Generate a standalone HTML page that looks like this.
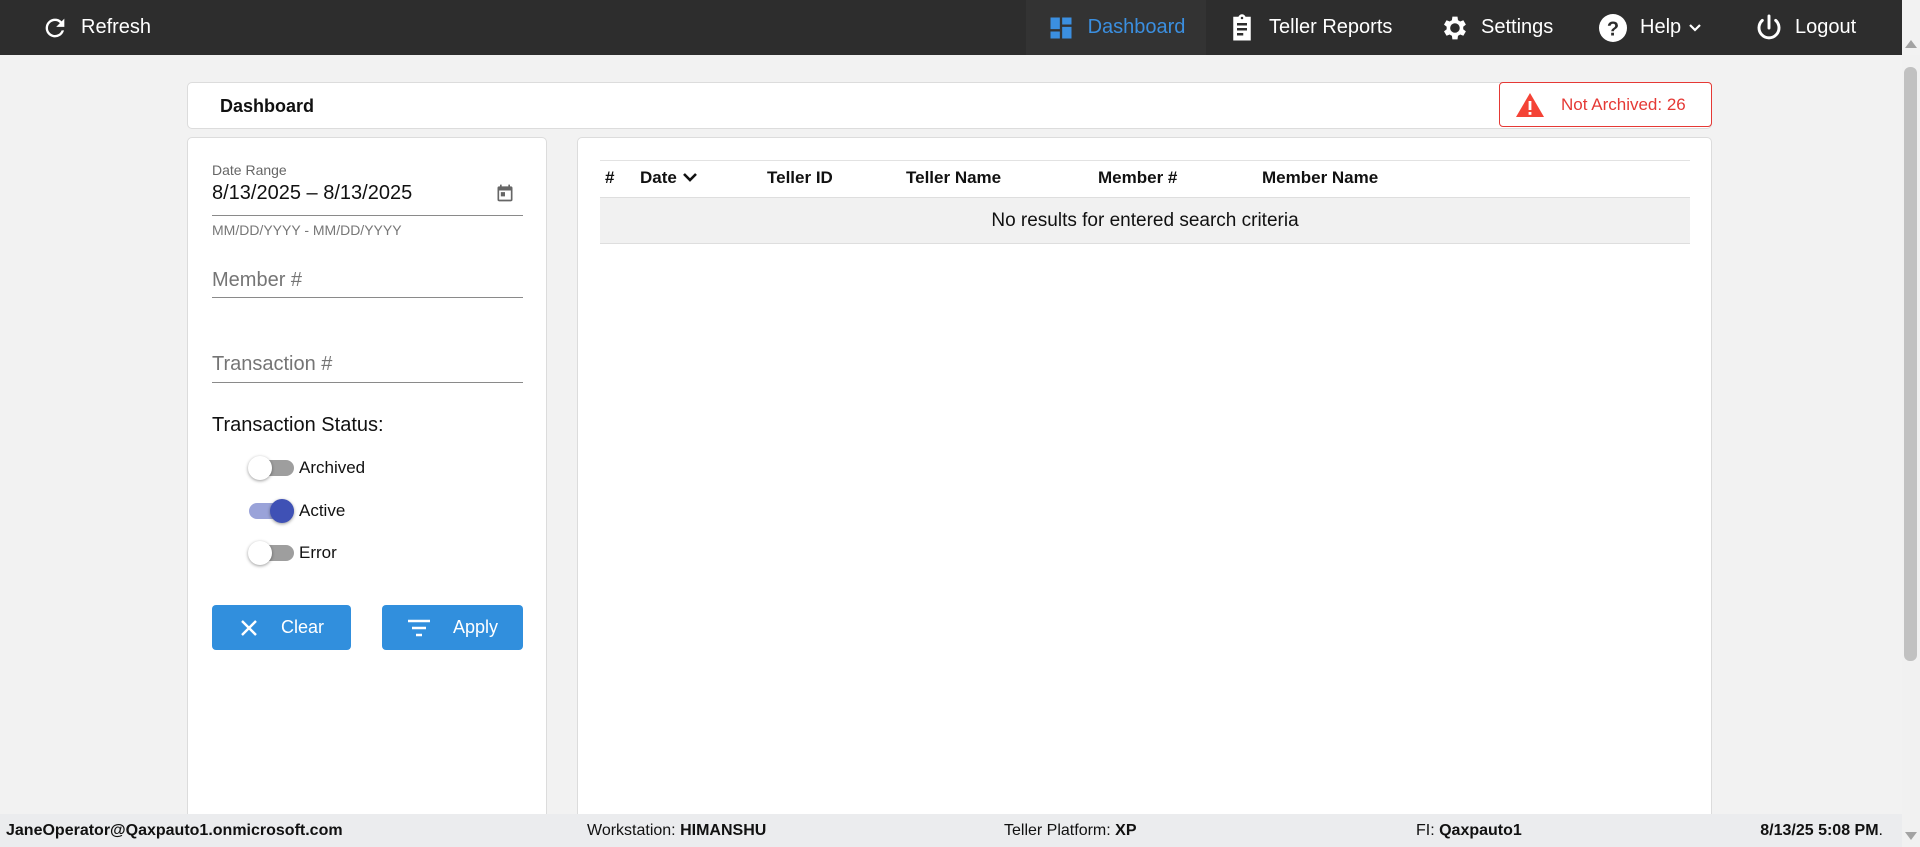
<!DOCTYPE html>
<html><head><meta charset="utf-8"><style>
*{box-sizing:border-box;margin:0;padding:0}
html,body{overflow:hidden}
body{width:1920px;height:847px;background:#f2f2f2;font-family:"Liberation Sans",Arial,sans-serif;position:relative;color:#111}
.abs{position:absolute}
.hdr{left:0;top:0;width:1902px;height:55px;background:#2d2d2d;color:#fff;font-size:20px}
.hdr .it{position:absolute;top:0;height:55px;display:flex;align-items:center}
.card{background:#fff;border:1px solid #dcdcdc;border-radius:5px}
.lab{color:#666}
.ul{height:1px;background:#8a8a8a;left:212px;width:311px}
.tg{left:249px;width:45px;height:16px;border-radius:8px;background:#9e9e9e}
.kn{width:24px;height:24px;border-radius:50%;background:#fff;top:-4px;box-shadow:0 1px 3px rgba(0,0,0,.4)}
.tl{left:299px;font-size:17px}
.btn{top:605px;height:45px;background:#318fdd;border-radius:4px;color:#fff;font-size:18px;display:flex;align-items:center;justify-content:center;gap:22px}
.th{top:168px;font-size:17px;font-weight:bold}
.ft{top:814px;left:0;width:1902px;height:33px;background:#ebecee;font-size:16px}
.ft span{position:absolute;top:8px}
</style></head><body>
<div class="abs hdr">
 <div class="it" style="left:41px"><svg width="28" height="28" viewBox="0 0 24 24"><path fill="#fff" d="M17.65 6.35A7.96 7.96 0 0 0 12 4a8 8 0 1 0 7.73 10h-2.08A6 6 0 1 1 12 6c1.66 0 3.14.69 4.22 1.78L13 11h7V4z"/></svg><span style="margin-left:12px">Refresh</span></div>
 <div class="it" style="left:1026px;width:180px;background:#333;justify-content:center"><svg width="28" height="28" viewBox="0 0 24 24"><path fill="#3b8fe0" d="M3 13h8V3H3zm0 8h8v-6H3zm10 0h8V11h-8zm0-18v6h8V3z"/></svg><span style="margin-left:13px;color:#3b8fe0">Dashboard</span></div>
 <div class="it" style="left:1227px"><svg width="30" height="30" viewBox="0 0 24 24"><path fill="#fff" d="M19 3h-4.18C14.4 1.84 13.3 1 12 1s-2.4.84-2.82 2H5v19h14zM12 3a1 1 0 1 1 0 2 1 1 0 0 1 0-2zm-4 5h8v2H8zm0 4h8v2H8zm0 4h5v2H8z"/></svg><span style="margin-left:12px">Teller Reports</span></div>
 <div class="it" style="left:1439px"><svg width="32" height="32" viewBox="0 0 24 24"><path fill="#fff" d="M19.14 12.94a7 7 0 0 0 0-1.88l2.03-1.58-1.92-3.32-2.39.96a7 7 0 0 0-1.62-.94L14.88 3.5h-3.84l-.36 2.68c-.59.24-1.13.56-1.62.94l-2.39-.96-1.92 3.32 2.03 1.58a7 7 0 0 0 0 1.88l-2.03 1.58 1.92 3.32 2.39-.96c.49.38 1.03.7 1.62.94l.36 2.68h3.84l.36-2.68c.59-.24 1.13-.56 1.62-.94l2.39.96 1.92-3.32zM12.96 15.6a3.6 3.6 0 1 1 0-7.2 3.6 3.6 0 0 1 0 7.2z" transform="translate(-1 0)"/></svg><span style="margin-left:10px">Settings</span></div>
 <div class="it" style="left:1597px"><svg width="32" height="32" viewBox="0 0 24 24"><circle cx="12" cy="12" r="10.5" fill="#fff"/><text x="12" y="17.5" text-anchor="middle" font-size="15" font-weight="bold" fill="#2d2d2d" font-family="Liberation Sans">?</text></svg><span style="margin-left:11px">Help</span><svg style="margin-left:6px" width="16" height="16" viewBox="0 0 16 16"><path d="M3 5l5 5 5-5" stroke="#fff" stroke-width="2.2" fill="none"/></svg></div>
 <div class="it" style="left:1753px"><svg width="32" height="32" viewBox="0 0 24 24"><path d="M12 3v9M7 6.3a7.5 7.5 0 1 0 10 0" stroke="#fff" stroke-width="2.2" fill="none" stroke-linecap="round"/></svg><span style="margin-left:10px">Logout</span></div>
</div>
<div class="abs" style="left:1902px;top:55px;width:18px;height:792px;background:#f1f1f1"></div>
<div class="abs" style="left:1904px;top:67px;width:13px;height:594px;background:#c1c1c1;border-radius:6px"></div>
<div class="abs" style="left:1905px;top:40px;width:0;height:0;border-left:6px solid transparent;border-right:6px solid transparent;border-bottom:8px solid #a3a3a3"></div>

<div class="abs card" style="left:187px;top:82px;width:1525px;height:47px"></div>
<div class="abs" style="left:220px;top:96px;font-size:18px;font-weight:bold">Dashboard</div>
<div class="abs" style="left:1499px;top:82px;width:213px;height:45px;border:1.5px solid #e53935;border-radius:4px;background:#fff;display:flex;align-items:center;padding-left:15px;color:#e53935;font-size:17px">
 <svg width="30" height="26" viewBox="0 0 30 26"><path d="M15 1L29 25H1z" fill="#f44336"/><rect x="13.6" y="9" width="2.8" height="9" fill="#fff"/><rect x="13.6" y="20" width="2.8" height="2.8" fill="#fff"/></svg><span style="margin-left:16px">Not Archived: 26</span></div>

<div class="abs card" style="left:187px;top:137px;width:360px;height:700px"></div>
<div class="abs card" style="left:577px;top:137px;width:1135px;height:700px"></div>

<div class="abs lab" style="left:212px;top:162px;font-size:14px">Date Range</div>
<div class="abs" style="left:212px;top:182px;font-size:20px">8/13/2025 – 8/13/2025</div>
<svg class="abs" style="left:495px;top:183px" width="20" height="20" viewBox="0 0 24 24"><path fill="#666" d="M19 4h-1V2h-2v2H8V2H6v2H5a2 2 0 0 0-2 2v14a2 2 0 0 0 2 2h14a2 2 0 0 0 2-2V6a2 2 0 0 0-2-2zm0 16H5V9h14zM7 11h5v5H7z"/></svg>
<div class="abs ul" style="top:215px"></div>
<div class="abs" style="left:212px;top:222px;font-size:14px;color:#777">MM/DD/YYYY - MM/DD/YYYY</div>
<div class="abs" style="left:212px;top:269px;font-size:20px;color:#757575">Member #</div>
<div class="abs ul" style="top:297px"></div>
<div class="abs" style="left:212px;top:353px;font-size:20px;color:#757575">Transaction #</div>
<div class="abs ul" style="top:382px"></div>
<div class="abs" style="left:212px;top:414px;font-size:20px">Transaction Status:</div>
<div class="abs tg" style="top:460px"><div class="abs kn" style="left:-1px"></div></div><div class="abs tl" style="top:458px">Archived</div>
<div class="abs tg" style="top:503px;background:#9aa3d9"><div class="abs kn" style="left:21px;background:#3f51b5"></div></div><div class="abs tl" style="top:501px">Active</div>
<div class="abs tg" style="top:545px"><div class="abs kn" style="left:-1px"></div></div><div class="abs tl" style="top:543px">Error</div>
<div class="abs btn" style="left:212px;width:139px"><svg width="20" height="20" viewBox="0 0 20 20"><path d="M3 3l14 14M17 3L3 17" stroke="#fff" stroke-width="2.4"/></svg><span>Clear</span></div>
<div class="abs btn" style="left:382px;width:141px"><svg width="24" height="20" viewBox="0 0 24 20"><path d="M1 3h22M5 10h14M9 17h6" stroke="#fff" stroke-width="2.5"/></svg><span>Apply</span></div>

<div class="abs" style="left:600px;top:160px;width:1090px;height:1px;background:#e2e2e2"></div>
<div class="abs th" style="left:605px">#</div>
<div class="abs th" style="left:640px">Date <svg width="16" height="14" viewBox="0 0 16 14" style="vertical-align:-1px"><path d="M2 4l6 6 6-6" stroke="#111" stroke-width="2.6" fill="none"/></svg></div>
<div class="abs th" style="left:767px">Teller ID</div>
<div class="abs th" style="left:906px">Teller Name</div>
<div class="abs th" style="left:1098px">Member #</div>
<div class="abs th" style="left:1262px">Member Name</div>
<div class="abs" style="left:600px;top:197px;width:1090px;height:47px;background:#f1f1f1;border-top:1px solid #dedede;border-bottom:1px solid #dedede;text-align:center;line-height:45px;font-size:19px">No results for entered search criteria</div>

<div class="abs ft">
 <span style="left:6px;font-weight:bold">JaneOperator@Qaxpauto1.onmicrosoft.com</span>
 <span style="left:587px">Workstation: <b>HIMANSHU</b></span>
 <span style="left:1004px">Teller Platform: <b>XP</b></span>
 <span style="left:1416px">FI: <b>Qaxpauto1</b></span>
 <span style="right:19px;font-weight:bold">8/13/25 5:08 PM<span style="position:static;font-weight:normal">.</span></span>
</div>
<div class="abs" style="left:1905px;top:832px;width:0;height:0;border-left:6px solid transparent;border-right:6px solid transparent;border-top:8px solid #a3a3a3"></div>
</body></html>
